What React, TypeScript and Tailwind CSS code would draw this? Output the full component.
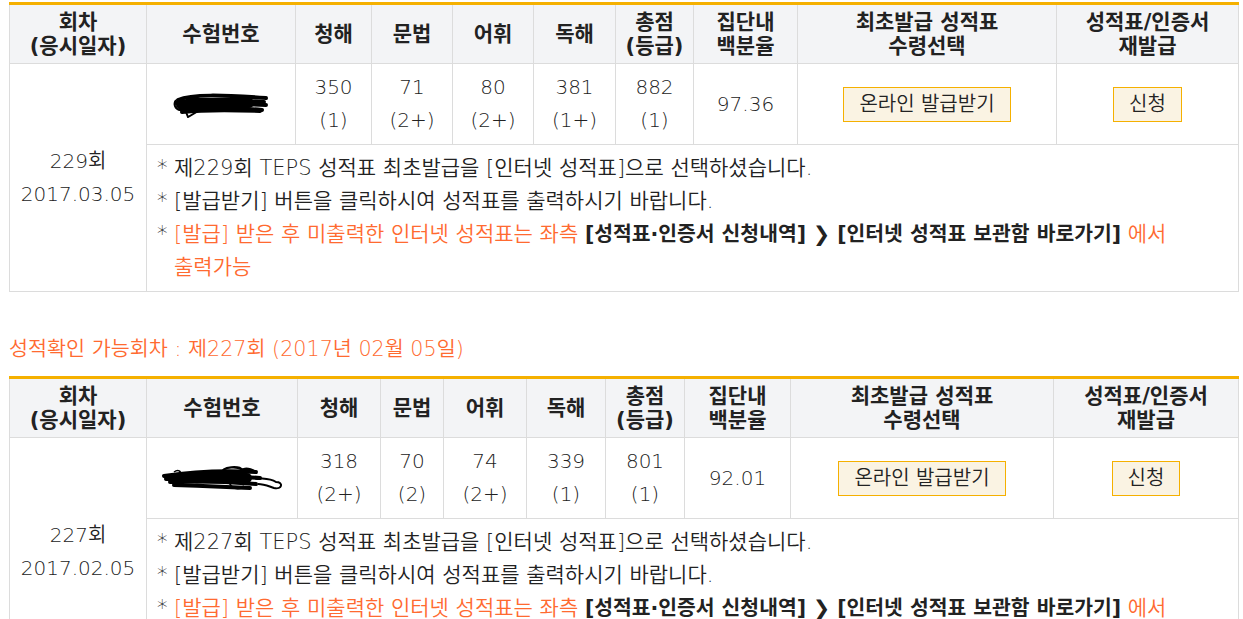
import React from "react";

type Round = {
  round: string;
  date: string;
  scores: [string, string][];
  total: [string, string];
  percentile: string;
  widths: number[];
  scribble: "a" | "b";
};

const rounds: Round[] = [
  {
    round: "229",
    date: "2017.03.05",
    scores: [
      ["350", "(1)"],
      ["71", "(2+)"],
      ["80", "(2+)"],
      ["381", "(1+)"],
    ],
    total: ["882", "(1)"],
    percentile: "97.36",
    widths: [137, 149, 76, 81, 81, 82, 78, 104, 259, 182],
    scribble: "a",
  },
  {
    round: "227",
    date: "2017.02.05",
    scores: [
      ["318", "(2+)"],
      ["70", "(2)"],
      ["74", "(2+)"],
      ["339", "(1)"],
    ],
    total: ["801", "(1)"],
    percentile: "92.01",
    widths: [137, 151, 83, 63, 83, 79, 79, 106, 263, 185],
    scribble: "b",
  },
];

const FONT = { fontFamily: '"DejaVu Sans", "Noto Sans CJK KR", sans-serif' };

// 수험번호 가림 낙서
function Scribble({ kind }: { kind: "a" | "b" }) {
  if (kind === "a") {
    return (
      <svg width="98" height="28" viewBox="0 0 98 28" className="mx-auto">
        <path
          d="M6 10 C20 4 50 5 94 8 M4 13 C30 9 60 10 92 12 M6 16 C35 13 70 14 94 15 M8 19 C40 17 70 18 90 20 M10 22 C30 20 60 20 88 21"
          stroke="#000"
          strokeWidth="4"
          fill="none"
          strokeLinecap="round"
        />
        <path d="M4 10 C1 14 3 19 8 20" stroke="#000" strokeWidth="2" fill="none" />
        <path d="M12 17 L16 27 L28 20" stroke="#000" strokeWidth="2" fill="none" />
        <rect x="12" y="8" width="70" height="10" rx="5" fill="#000" />
      </svg>
    );
  }
  return (
    <svg width="124" height="28" viewBox="0 0 124 28" className="mx-auto">
      <path
        d="M4 12 C30 8 60 6 96 8 M6 15 C35 12 70 12 100 14 M10 18 C40 17 70 18 96 20 M14 21 C40 22 70 23 90 24"
        stroke="#000"
        strokeWidth="4"
        fill="none"
        strokeLinecap="round"
      />
      <rect x="12" y="9" width="80" height="10" rx="5" fill="#000" />
      <path d="M62 9 C62 2 80 2 82 6 C86 3 96 6 96 10" stroke="#000" strokeWidth="2.5" fill="none" />
      <path d="M96 14 C104 15 110 14 116 18 C124 18 122 26 114 24 C108 22 104 20 98 20" stroke="#000" strokeWidth="2" fill="none" />
      <path d="M14 8 C18 5 22 7 20 11" stroke="#000" strokeWidth="1.5" fill="none" />
      <path d="M70 20 C72 25 80 26 84 22" stroke="#000" strokeWidth="2" fill="none" />
    </svg>
  );
}

function ScoreTable({ r }: { r: Round }) {
  const th = "border border-[#dcdcdc] font-bold text-[21px] leading-[24px] text-[#222] text-center align-middle";
  const td = "border border-[#dcdcdc] font-[350] text-[20px] leading-[33px] text-[#222] text-center align-middle";
  const btn = "border border-[#f5b000] bg-[#faf3e3] h-[35px] px-[15px] font-[350] text-[20px] leading-[33px] text-[#222]";
  return (
    <table className="table-fixed border-collapse w-[1229px] border-t-[3px] border-t-[#f5b000]" style={FONT}>
      <colgroup>
        {r.widths.map((w, i) => (
          <col key={i} style={{ width: w }} />
        ))}
      </colgroup>
      <thead>
        <tr className="h-[60px] bg-[#f3f4f6]">
          <th className={th}>
            회차
            <br />
            (응시일자)
          </th>
          <th className={th}>수험번호</th>
          <th className={th}>청해</th>
          <th className={th}>문법</th>
          <th className={th}>어휘</th>
          <th className={th}>독해</th>
          <th className={th}>
            총점
            <br />
            (등급)
          </th>
          <th className={th}>
            집단내
            <br />
            백분율
          </th>
          <th className={th}>
            최초발급 성적표
            <br />
            수령선택
          </th>
          <th className={th}>
            성적표/인증서
            <br />
            재발급
          </th>
        </tr>
      </thead>
      <tbody>
        <tr className="h-[81px]">
          <td className={td} rowSpan={2}>
            {r.round}회
            <br />
            {r.date}
          </td>
          <td className={td}>
            <Scribble kind={r.scribble} />
          </td>
          {r.scores.map(([s, g], i) => (
            <td key={i} className={td}>
              {s}
              <br />
              {g}
            </td>
          ))}
          <td className={td}>
            {r.total[0]}
            <br />
            {r.total[1]}
          </td>
          <td className={td}>{r.percentile}</td>
          <td className={td}>
            <button className={btn}>온라인 발급받기</button>
          </td>
          <td className={td}>
            <button className={btn}>신청</button>
          </td>
        </tr>
        <tr className="h-[147px]">
          <td colSpan={9} className="border border-[#dcdcdc] font-[350] text-[21px] leading-[33px] text-[#222] align-top pt-[7px] pl-[10px]">
            <div className="flex">
              <span className="w-[17px] shrink-0">*</span>
              <span>제{r.round}회 TEPS 성적표 최초발급을 [인터넷 성적표]으로 선택하셨습니다.</span>
            </div>
            <div className="flex">
              <span className="w-[17px] shrink-0">*</span>
              <span>[발급받기] 버튼을 클릭하시여 성적표를 출력하시기 바랍니다.</span>
            </div>
            <div className="flex">
              <span className="w-[17px] shrink-0">*</span>
              <span className="text-[#ff6a30] whitespace-nowrap">
                [발급] 받은 후 미출력한 인터넷 성적표는 좌측{" "}
                <b className="font-bold text-[20.4px] text-[#222]">[성적표·인증서 신청내역] ❯ [인터넷 성적표 보관함 바로가기]</b> 에서
                <br />
                출력가능
              </span>
            </div>
          </td>
        </tr>
      </tbody>
    </table>
  );
}

export default function App() {
  return (
    <div className="bg-white min-h-[619px] pt-[2px] pl-[9px]" style={FONT}>
      <ScoreTable r={rounds[0]} />
      <div className="pt-[41px] pb-[10px] font-[350] text-[20.7px] leading-[33px] text-[#ff6a30]">
        성적확인 가능회차 : 제227회 (2017년 02월 05일)
      </div>
      <ScoreTable r={rounds[1]} />
    </div>
  );
}
